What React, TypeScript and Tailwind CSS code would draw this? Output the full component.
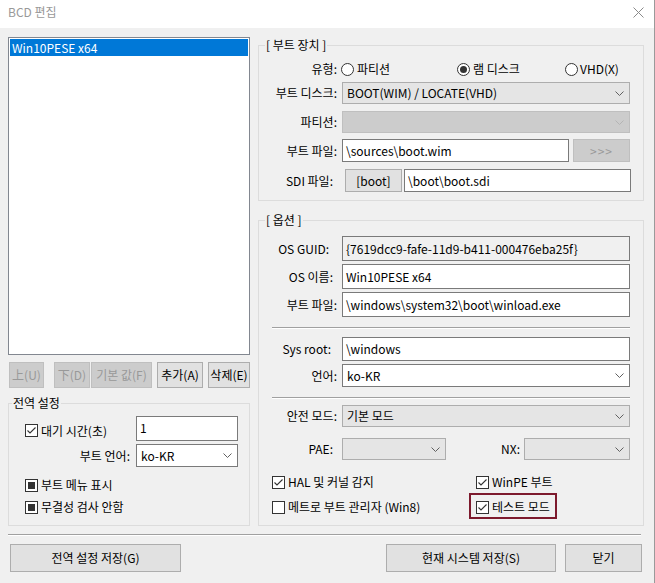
import React from 'react';

type Tri = 'on' | 'off' | 'mixed';

const Chevron = ({ off = false }: { off?: boolean }) => (
  <svg width="9" height="5" viewBox="0 0 9 5" className="shrink-0">
    <polyline points="0.5,0.5 4.5,4.5 8.5,0.5" fill="none" stroke={off ? '#b4b4b4' : '#606060'} strokeWidth="1" />
  </svg>
);

interface ComboProps {
  value?: string;
  kind?: 'list' | 'edit' | 'off';
  className?: string;
}

const Combo = ({ value = '', kind = 'list', className = '' }: ComboProps) => {
  const tone =
    kind === 'edit'
      ? 'bg-white border-[#7a7a7a]'
      : kind === 'off'
      ? 'bg-[#cccccc] border-[#bfbfbf]'
      : 'bg-[#e5e5e5] border-[#adadad]';
  return (
    <div className={`flex items-center border pl-[4px] pr-[5px] ${tone} ${className}`}>
      <span className="flex-1 whitespace-nowrap leading-[16px]">{value}</span>
      <Chevron off={kind === 'off'} />
    </div>
  );
};

const TextBox = ({ value, readOnly = false, className = '' }: { value: string; readOnly?: boolean; className?: string }) => (
  <div
    className={`flex items-center border border-[#7a7a7a] pl-[3px] leading-[16px] ${readOnly ? 'bg-[#f0f0f0]' : 'bg-white'} ${className}`}
  >
    {value}
  </div>
);

const Btn = ({ children, disabled = false, className = '' }: { children: React.ReactNode; disabled?: boolean; className?: string }) => (
  <button
    type="button"
    className={`flex items-center justify-center border leading-[16px] ${
      disabled ? 'bg-[#cccccc] border-[#bfbfbf] text-[#999999]' : 'bg-[#e1e1e1] border-[#adadad]'
    } ${className}`}
  >
    {children}
  </button>
);

const Check = ({ state }: { state: Tri }) => (
  <span className="w-[13px] h-[13px] border border-[#333333] bg-white flex items-center justify-center shrink-0">
    {state === 'on' && (
      <svg width="11" height="11" viewBox="0 0 11 11">
        <polyline points="1.5,5.5 4,8 9.5,2.5" fill="none" stroke="#333333" strokeWidth="1.1" />
      </svg>
    )}
    {state === 'mixed' && <span className="w-[7px] h-[7px] bg-[#333333]" />}
  </span>
);

const Radio = ({ on = false }: { on?: boolean }) => (
  <span className="w-[13px] h-[13px] rounded-full border border-[#333333] bg-white flex items-center justify-center shrink-0">
    {on && <span className="w-[7px] h-[7px] rounded-full bg-[#333333]" />}
  </span>
);

const Group = ({ title, titleLeft, className = '', children }: { title: string; titleLeft: string; className?: string; children: React.ReactNode }) => (
  <div className={`relative border border-[#dcdcdc] ${className}`}>
    <span className={`absolute top-[-8px] px-[1px] bg-[#f0f0f0] leading-[14px] whitespace-nowrap ${titleLeft}`}>{title}</span>
    {children}
  </div>
);

const Sep = ({ className = '' }: { className?: string }) => (
  <div className={`h-[2px] border-t border-[#a0a0a0] bg-white ${className}`} />
);

export default function App() {
  return (
    <div className="w-[655px] h-[583px] bg-[#f0f0f0] border-r border-[#9a9a9a] text-[12px] leading-none text-black font-['Noto_Sans_CJK_KR','Noto_Sans',sans-serif] overflow-hidden">
      {/* title bar */}
      <div className="h-[28px] bg-white flex items-center justify-between pl-[8px] pr-[10px] pb-[4px]">
        <span className="text-[#999999]">BCD 편집</span>
        <svg width="11" height="11" viewBox="0 0 11 11">
          <path d="M0.5 0.5 L10.5 10.5 M10.5 0.5 L0.5 10.5" stroke="#8a8a8a" strokeWidth="1" />
        </svg>
      </div>

      <div className="flex pl-[8px] pt-[9px]">
        {/* left column */}
        <div className="w-[242px] flex flex-col">
          <div className="h-[318px] border border-[#828790] bg-white p-[1px]">
            <div className="h-[17px] bg-[#0078d7] text-white flex items-center pl-[2px]">Win10PESE x64</div>
          </div>

          <div className="flex h-[26px] mt-[7px]">
            <Btn disabled className="w-[35px] ml-[1px]">上(U)</Btn>
            <Btn disabled className="w-[36px] ml-[10px]">下(D)</Btn>
            <Btn disabled className="w-[61px] ml-[1px]">기본 값(F)</Btn>
            <Btn className="w-[46px] ml-[5px]">추가(A)</Btn>
            <Btn className="w-[42px] ml-[5px]">삭제(E)</Btn>
          </div>

          <Group title="전역 설정" titleLeft="left-[3px]" className="h-[123px] mt-[15px]">
            <div className="flex pl-[16px] mt-[12px]">
              <div className="w-[111px] flex items-center gap-[3px] pt-[8px] self-start">
                <Check state="on" />
                <span>대기 시간(초)</span>
              </div>
              <TextBox value="1" className="w-[102px] h-[25px] items-start pt-[3px]" />
            </div>
            <div className="flex items-center mt-[3px]">
              <div className="w-[127px] text-right pr-[6px]">부트 언어:</div>
              <Combo kind="edit" value="ko-KR" className="w-[102px] h-[23px]" />
            </div>
            <div className="flex items-center gap-[3px] h-[16px] pl-[16px] mt-[10px]">
              <Check state="mixed" />
              <span>부트 메뉴 표시</span>
            </div>
            <div className="flex items-center gap-[3px] h-[16px] pl-[16px] mt-[6px]">
              <Check state="mixed" />
              <span>무결성 검사 안함</span>
            </div>
          </Group>
        </div>

        {/* right column */}
        <div className="w-[386px] ml-[8px] flex flex-col">
          <Group title="[ 부트 장치 ]" titleLeft="left-[6px]" className="h-[156px] mt-[8px]">
            <div className="flex items-center h-[22px] mt-[12px]">
              <div className="w-[79px] text-right pr-[1px]">유형:</div>
              <div className="flex items-center ml-[3px]">
                <div className="w-[116px] flex items-center gap-[3px]">
                  <Radio />
                  <span>파티션</span>
                </div>
                <div className="w-[108px] flex items-center gap-[3px]">
                  <Radio on />
                  <span>램 디스크</span>
                </div>
                <div className="flex items-center gap-[2px]">
                  <Radio />
                  <span>VHD(X)</span>
                </div>
              </div>
            </div>
            <div className="flex items-center mt-[2px]">
              <div className="w-[79px] text-right pr-[1px]">부트 디스크:</div>
              <Combo value="BOOT(WIM) / LOCATE(VHD)" className="ml-[4px] w-[288px] h-[22px]" />
            </div>
            <div className="flex items-center mt-[7px]">
              <div className="w-[79px] text-right pr-[1px]">파티션:</div>
              <Combo kind="off" className="ml-[4px] w-[288px] h-[22px]" />
            </div>
            <div className="flex items-center mt-[6px]">
              <div className="w-[79px] text-right pr-[1px]">부트 파일:</div>
              <TextBox value="\sources\boot.wim" className="ml-[4px] w-[227px] h-[23px]" />
              <Btn disabled className="ml-[4px] w-[57px] h-[23px] tracking-[1px]">&gt;&gt;&gt;</Btn>
            </div>
            <div className="flex items-center mt-[7px]">
              <div className="w-[79px] text-right pr-[5px]">SDI 파일:</div>
              <Btn className="ml-[7px] w-[57px] h-[23px]">[boot]</Btn>
              <TextBox value="\boot\boot.sdi" className="ml-[2px] w-[227px] h-[23px]" />
            </div>
          </Group>

          <Group title="[ 옵션 ]" titleLeft="left-[6px]" className="h-[306px] mt-[19px]">
            <div className="flex items-center mt-[15px]">
              <div className="w-[79px] text-right pr-[9px]">OS GUID:</div>
              <TextBox readOnly value="{7619dcc9-fafe-11d9-b411-000476eba25f}" className="ml-[4px] w-[288px] h-[25px]" />
            </div>
            <div className="flex items-center mt-[3px]">
              <div className="w-[79px] text-right pr-[5px]">OS 이름:</div>
              <TextBox value="Win10PESE x64" className="ml-[4px] w-[288px] h-[25px]" />
            </div>
            <div className="flex items-center mt-[3px]">
              <div className="w-[79px] text-right pr-[1px]">부트 파일:</div>
              <TextBox value="\windows\system32\boot\winload.exe" className="ml-[4px] w-[288px] h-[25px]" />
            </div>
            <Sep className="ml-[13px] w-[358px] mt-[10px]" />
            <div className="flex items-center mt-[8px]">
              <div className="w-[79px] text-right pr-[7px]">Sys root:</div>
              <TextBox value="\windows" className="ml-[4px] w-[288px] h-[24px]" />
            </div>
            <div className="flex items-center mt-[3px]">
              <div className="w-[79px] text-right pr-[1px]">언어:</div>
              <Combo kind="edit" value="ko-KR" className="ml-[4px] w-[288px] h-[23px]" />
            </div>
            <Sep className="ml-[13px] w-[358px] mt-[10px]" />
            <div className="flex items-center mt-[6px]">
              <div className="w-[79px] text-right pr-[1px]">안전 모드:</div>
              <Combo value="기본 모드" className="ml-[4px] w-[288px] h-[22px]" />
            </div>
            <div className="flex items-center mt-[11px]">
              <div className="w-[79px] text-right pr-[5px]">PAE:</div>
              <Combo className="ml-[4px] w-[104px] h-[22px]" />
              <div className="w-[78px] text-right pr-[4px]">NX:</div>
              <Combo className="w-[106px] h-[22px]" />
            </div>
            <div className="flex items-center h-[16px] mt-[14px] pl-[13px]">
              <div className="w-[204px] flex items-center gap-[3px]">
                <Check state="on" />
                <span>HAL 및 커널 감지</span>
              </div>
              <div className="flex items-center gap-[3px]">
                <Check state="on" />
                <span>WinPE 부트</span>
              </div>
            </div>
            <div className="flex items-center h-[16px] mt-[9px] pl-[13px]">
              <div className="w-[204px] flex items-center gap-[3px]">
                <Check state="off" />
                <span>메트로 부트 관리자 (Win8)</span>
              </div>
              <div className="relative flex items-center gap-[3px]">
                <Check state="on" />
                <span>테스트 모드</span>
                <span className="absolute left-[-7px] top-[-8px] w-[88px] h-[26px] border-2 border-[#7d1a2d]" />
              </div>
            </div>
          </Group>
        </div>
      </div>

      <Sep className="ml-[8px] w-[633px] mt-[8px]" />

      <div className="flex h-[28px] mt-[8px]">
        <Btn className="ml-[10px] w-[171px]">전역 설정 저장(G)</Btn>
        <Btn className="ml-[205px] w-[170px]">현재 시스템 저장(S)</Btn>
        <Btn className="ml-[9px] w-[77px]">닫기</Btn>
      </div>
    </div>
  );
}
